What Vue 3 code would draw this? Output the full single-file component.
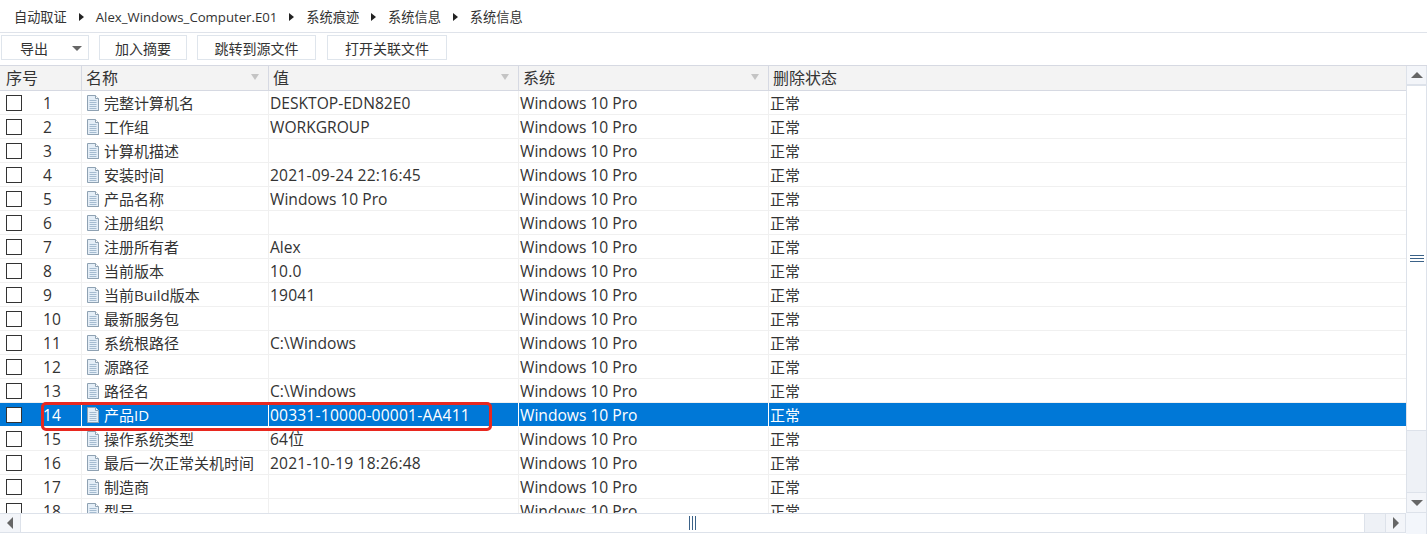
<script setup>
const crumbs = ["自动取证", "Alex_Windows_Computer.E01", "系统痕迹", "系统信息", "系统信息"];
const columns = [
  { name: "序号", cls: "c-no" },
  { name: "名称", cls: "c-name", filter: true },
  { name: "值", cls: "c-val", filter: true },
  { name: "系统", cls: "c-val", filter: true },
  { name: "删除状态", cls: "c-rest" },
];
const rows = [
  ["完整计算机名", "DESKTOP-EDN82E0"],
  ["工作组", "WORKGROUP"],
  ["计算机描述", ""],
  ["安装时间", "2021-09-24 22:16:45"],
  ["产品名称", "Windows 10 Pro"],
  ["注册组织", ""],
  ["注册所有者", "Alex"],
  ["当前版本", "10.0"],
  ["当前Build版本", "19041"],
  ["最新服务包", ""],
  ["系统根路径", "C:\\Windows"],
  ["源路径", ""],
  ["路径名", "C:\\Windows"],
  ["产品ID", "00331-10000-00001-AA411"],
  ["操作系统类型", "64位"],
  ["最后一次正常关机时间", "2021-10-19 18:26:48"],
  ["制造商", ""],
  ["型号", ""],
];
const startsWithDigit = (v) => /^\d/.test(v);
</script>

<template>
  <div class="page">
    <div class="crumbs">
      <template v-for="(c, i) in crumbs" :key="i">
        <span>{{ c }}</span>
        <i v-if="i < crumbs.length - 1" class="crumb-arrow"></i>
      </template>
    </div>
    <div class="toolbar">
      <button class="btn btn-export">导出<i class="caret"></i></button>
      <button class="btn btn-a">加入摘要</button>
      <button class="btn btn-b">跳转到源文件</button>
      <button class="btn btn-c">打开关联文件</button>
    </div>
    <div class="table-wrap">
      <div class="table-main">
        <div class="thead">
          <div v-for="col in columns" :key="col.name" class="th" :class="col.cls">
            {{ col.name }}
            <i v-if="col.filter" class="filter"></i>
          </div>
        </div>
        <div class="tbody">
          <div v-for="(row, i) in rows" :key="i" class="tr" :class="{ selected: i === 13 }">
            <div class="td c-no">
              <span class="check"></span>
              <span class="num">{{ i + 1 }}</span>
            </div>
            <div class="td c-name">
              <svg class="doc" width="13" height="17" viewBox="0 0 13 17">
                <path d="M1 1H8.5L12 4.5V16H1Z" fill="#8e9aa6" />
                <path d="M.5 .5H8.5L11.5 3.5V15.5H.5Z" fill="#e4eef7" stroke="#8fa2b3" />
                <path d="M8.5 .5V3.5H11.5" fill="#fff" stroke="#8fa2b3" />
                <path d="M2.5 5.5H9.5M2.5 7.5H9.5M2.5 9.5H9.5M2.5 11.5H9.5M2.5 13.5H9.5" stroke="#a4bbd0" />
              </svg>
              <span>{{ row[0] }}</span>
            </div>
            <div class="td c-val latin" :class="{ digits: startsWithDigit(row[1]) }">{{ row[1] }}</div>
            <div class="td c-val latin">Windows 10 Pro</div>
            <div class="td c-rest">正常</div>
          </div>
        </div>
        <div class="hbar">
          <div class="sbtn sbtn-left"><i class="tri-left"></i></div>
          <div class="htrack">
            <span class="grip-v"></span>
          </div>
          <div class="hrest"></div>
          <div class="sbtn sbtn-right"><i class="tri-right"></i></div>
        </div>
      </div>
      <div class="vbar">
        <div class="vbtn vbtn-up"><i class="tri-up"></i></div>
        <div class="vtrack"><span class="grip-h"></span></div>
        <div class="vrest"></div>
        <div class="vbtn vbtn-down"><i class="tri-down"></i></div>
        <div class="corner"></div>
      </div>
      <div class="highlight"></div>
    </div>
  </div>
</template>

<style>
html, body { margin: 0; background: #fff; overflow: hidden; }
</style>

<style scoped>
.page {
  width: 1427px;
  height: 534px;
  display: flex;
  flex-direction: column;
  font-family: "Open Sans", "Noto Sans CJK SC", sans-serif;
  color: #333;
  background: #fff;
  overflow: hidden;
}
.crumbs {
  height: 33px;
  box-sizing: border-box;
  border-bottom: 1px solid #dfe3ea;
  padding: 2px 0 0 14px;
  display: flex;
  align-items: center;
  font-size: 13.2px;
  line-height: 30px;
}
.crumb-arrow {
  width: 0;
  height: 0;
  margin: 0 12px 0 12px;
  border-left: 5px solid #222;
  border-top: 4px solid transparent;
  border-bottom: 4px solid transparent;
}
.toolbar {
  height: 32px;
  box-sizing: border-box;
  padding: 2px 0 0 1px;
  display: flex;
}
.btn {
  height: 25px;
  box-sizing: border-box;
  padding: 0;
  margin-right: 10px;
  border: 1px solid #dfe5ec;
  background: #fff;
  color: #333;
  font: 14px "Open Sans", "Noto Sans CJK SC", sans-serif;
  display: flex;
  align-items: center;
  justify-content: center;
}
.btn-export { width: 88px; justify-content: flex-start; padding-left: 18px; }
.btn-a { width: 88px; }
.btn-b { width: 119px; margin-right: 11px; }
.btn-c { width: 120px; }
.caret {
  margin-left: 24px;
  margin-top: 2px;
  width: 0;
  height: 0;
  border-top: 5px solid #666;
  border-left: 5.5px solid transparent;
  border-right: 5.5px solid transparent;
}
.table-wrap {
  position: relative;
  height: 469px;
  display: flex;
  border-top: 1px solid #d6d9e2;
  box-sizing: border-box;
}
.table-main {
  width: 1406px;
  flex: none;
  display: flex;
  flex-direction: column;
}
.thead {
  height: 25px;
  flex: none;
  box-sizing: border-box;
  display: flex;
  background: #f3f3f3;
  border-bottom: 1px solid #d6d9e2;
}
.th {
  position: relative;
  box-sizing: border-box;
  border-right: 1px solid #d6d9e2;
  font-size: 16px;
  line-height: 24px;
  padding-left: 4px;
  color: #333;
}
.th:first-child { padding-left: 6px; }
.th:last-child { border-right: none; }
.c-no { width: 82px; flex: none; }
.c-name { width: 187px; flex: none; }
.c-val { width: 250px; flex: none; }
.c-rest { flex: 1; }
.filter {
  position: absolute;
  right: 9px;
  top: 8px;
  width: 0;
  height: 0;
  border-top: 6px solid #c4c4c4;
  border-left: 4px solid transparent;
  border-right: 4px solid transparent;
}
.tbody {
  height: 422px;
  flex: none;
  overflow: hidden;
}
.tr {
  height: 24px;
  box-sizing: border-box;
  display: flex;
  border-bottom: 1px solid #f0f0f0;
}
.td {
  box-sizing: border-box;
  border-right: 1px solid #f0f0f0;
  padding: 1px 0 0 2px;
  font-size: 15px;
  line-height: 22px;
  display: flex;
  align-items: center;
  white-space: nowrap;
}
.td:last-child { border-right: none; padding-left: 1px; }
.td.latin { font-size: 15.6px; padding-left: 1px; }
.td.digits { letter-spacing: .2px; }
.check {
  width: 16px;
  height: 16px;
  box-sizing: border-box;
  border: 1px solid #333;
  background: #fff;
  margin-left: 4px;
  flex: none;
}
.num { margin-left: 21px; font-size: 15.6px; }
.doc { margin: 0 4px 0 3px; flex: none; }
.selected { background: #0078d7; border-bottom-color: #fff; }
.selected .td { color: #fff; border-right-color: #fff; }
.hbar {
  height: 20px;
  flex: none;
  box-sizing: border-box;
  display: flex;
  border-top: 1px solid #dde2ea;
  border-bottom: 1px solid #dde2ea;
}
.sbtn {
  width: 21px;
  flex: none;
  box-sizing: border-box;
  background: #f3f5f9;
  display: flex;
  align-items: center;
  justify-content: center;
}
.sbtn-left { border-right: 1px solid #dde2ea; }
.sbtn-right { border-left: 1px solid #dde2ea; border-right: 1px solid #dde2ea; }
.htrack {
  width: 1344px;
  flex: none;
  background: #fff;
  display: flex;
  align-items: center;
  justify-content: center;
  border-right: 1px solid #dde2ea;
  box-sizing: border-box;
}
.hrest { flex: 1; background: #eef1f6; }
.grip-v {
  width: 7px;
  height: 14px;
  background: repeating-linear-gradient(90deg, #3b6288 0 1px, transparent 1px 3px);
}
.tri-left {
  width: 0; height: 0;
  border-right: 6px solid #666;
  border-top: 6px solid transparent;
  border-bottom: 6px solid transparent;
}
.tri-right {
  width: 0; height: 0;
  border-left: 6px solid #666;
  border-top: 6px solid transparent;
  border-bottom: 6px solid transparent;
}
.vbar {
  width: 21px;
  flex: none;
  height: 468px;
  box-sizing: border-box;
  display: flex;
  flex-direction: column;
  border-right: 1px solid #dde2ea;
  background: #f3f6fb;
}
.vbtn {
  height: 20px;
  flex: none;
  box-sizing: border-box;
  display: flex;
  align-items: center;
  justify-content: center;
  background: #f3f5f9;
  border-left: 1px solid #dde2ea;
  border-bottom: 2px solid #dde2ea;
}
.vbtn-down { border-top: 1px solid #dde2ea; border-bottom: 1px solid #dde2ea; height: 21px; }
.vtrack {
  height: 345px;
  flex: none;
  box-sizing: border-box;
  border-left: 1px solid #dde2ea;
  border-bottom: 1px solid #dde2ea;
  background: #fff;
  display: flex;
  align-items: center;
  justify-content: center;
}
.vrest { flex: 1; background: #eef1f6; border-left: 1px solid #dde2ea; }
.corner { height: 21px; flex: none; }
.grip-h {
  width: 14px;
  height: 7px;
  background: repeating-linear-gradient(180deg, #3b6288 0 1px, transparent 1px 3px);
}
.tri-up {
  width: 0; height: 0;
  border-bottom: 6px solid #666;
  border-left: 6px solid transparent;
  border-right: 6px solid transparent;
}
.tri-down {
  width: 0; height: 0;
  border-top: 6px solid #666;
  border-left: 6px solid transparent;
  border-right: 6px solid transparent;
}
.highlight {
  position: absolute;
  left: 41px;
  top: 336px;
  width: 451px;
  height: 29px;
  box-sizing: border-box;
  border: 3px solid #e8281f;
  border-radius: 5px;
}
</style>
